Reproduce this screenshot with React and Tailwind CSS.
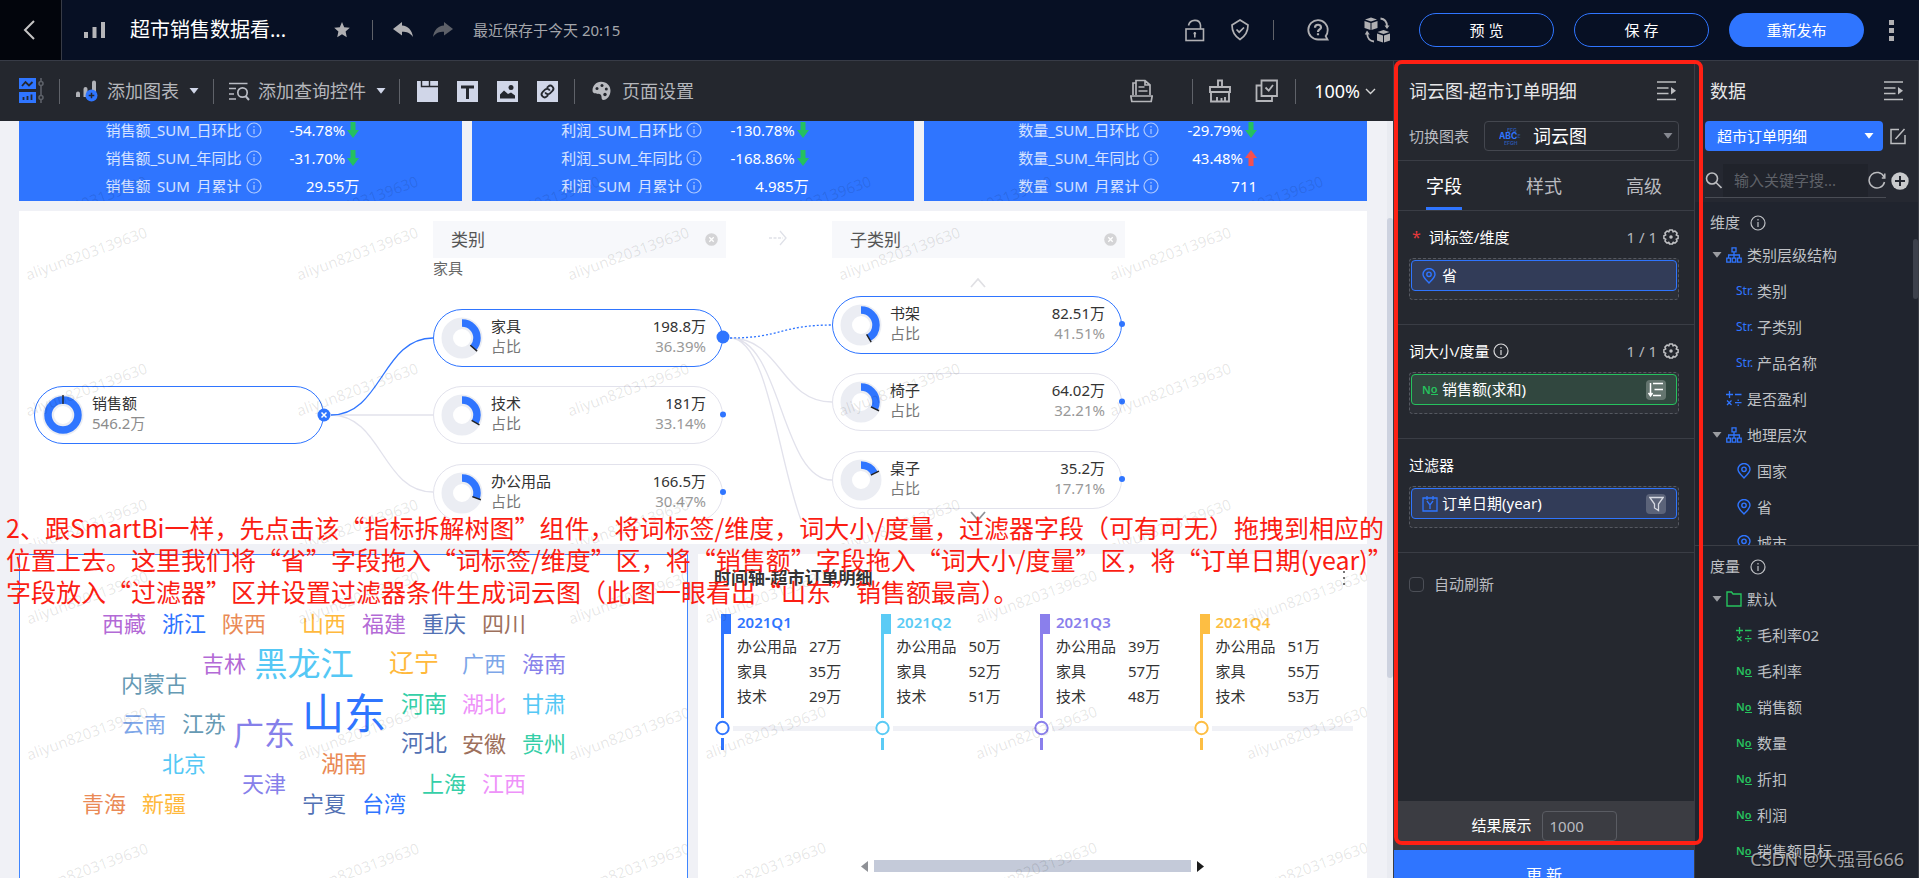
import React from "react";

const BLUE = "#2f75ff";

/* ---------- icons ---------- */

const Caret = ({ className = "" }) => (
  <svg className={className} width="10" height="6" viewBox="0 0 10 6" fill="currentColor" aria-hidden="true">
    <path d="M.5 0h9L5 5.800z" />
  </svg>
);

const InfoIcon = ({ className = "" }) => (
  <svg className={className} width="16" height="16" viewBox="0 0 16 16" fill="none" stroke="currentColor" strokeWidth="1.2" aria-hidden="true">
    <circle cx="8" cy="8" r="7" />
    <path d="M8 7v5M8 4v1.6" />
  </svg>
);

const BackIcon = () => (
  <svg width="12" height="20" viewBox="0 0 12 20" fill="none" stroke="#c5c5c5" strokeWidth="2" aria-hidden="true">
    <path d="M11 1 2 10l9 9" />
  </svg>
);

const BarsIcon = () => (
  <svg width="22" height="18" viewBox="0 0 22 18" fill="#b5b5b8" aria-hidden="true">
    <path d="M0 11h4v6H0zM8.500 6h4v11h-4zM17 1h4v16h-4z" />
  </svg>
);

const StarIcon = () => (
  <svg width="16" height="16" viewBox="0 0 16 16" fill="#b0b0b3" aria-hidden="true">
    <path d="M8 0l2.200 5.200 5.600.5-4.200 3.800 1.200 5.700L8 12.200l-4.800 3 1.200-5.700L.2 5.700l5.600-.5z" />
  </svg>
);

const UndoIcon = ({ flip = false }) => (
  <svg width="20" height="16" viewBox="0 0 20 16" fill={flip ? "#5d6068" : "#b0b0b3"} aria-hidden="true">
    <path transform={flip ? "translate(20 0) scale(-1 1)" : undefined} d="M9 0v3.500c6 .5 10 4.500 11 11.500-3-4-6-5.200-11-5.200v3.700L0 7z" />
  </svg>
);

const LockIcon = () => (
  <svg width="20" height="23" viewBox="0 0 20 23" fill="none" stroke="#b0b0b3" strokeWidth="1.6" aria-hidden="true">
    <rect x="1" y="10" width="17.500" height="11.500" />
    <path d="M3.500 6.500C5 0 14.500-.5 15.500 6v4M9.800 13v5.500" />
    <path d="M8.500 14.500h2.600" />
  </svg>
);

const ShieldIcon = () => (
  <svg width="18" height="22" viewBox="0 0 18 22" fill="none" stroke="#b0b0b3" strokeWidth="1.7" aria-hidden="true">
    <path d="M9 1 17 6c0 6-2.500 11-8 14.500C3.500 17 1 12 1 6z" />
    <path d="m5.500 10.500 2.700 2.700L13 8.500" />
  </svg>
);

const HelpIcon = () => (
  <svg width="23" height="22" viewBox="0 0 23 22" fill="none" stroke="#b0b0b3" strokeWidth="1.8" aria-hidden="true">
    <path d="M20.500 20.500H11A9.700 9.700 0 1 1 20.700 11c0 3-1 5-2 6.200z" />
    <path d="M8 8.800c0-4 6-4 6-.3 0 2-3 2-3 4.500M11 14.300v2" strokeWidth="2.200" />
  </svg>
);

const CubesIcon = () => (
  <svg width="26" height="26" viewBox="0 0 26 26" aria-hidden="true">
    <g fill="#b0b0b3">
      <path d="m7 .5 6 2-6 2-6-2zM.5 4l6 2v7l-6-2zM13.500 4l-6 2v7l6-2z" />
      <path d="m19.500 13 6 2-6 2-6-2zM13 16.500l6 2v7l-6-2zM26 16.500l-6 2v7l6-2z" />
      <path d="M20.500 8.500h5L23 12zM.8 17.500h5L3 13.500z" />
    </g>
    <path d="M16.500 1.500C20.500 2 22.800 4.500 23 9M3.200 17c.3 4 2.500 7 6.800 7.500" fill="none" stroke="#b0b0b3" strokeWidth="1.800" />
  </svg>
);

const LayoutIcon = () => (
  <svg width="26" height="26" viewBox="0 0 26 26" aria-hidden="true">
    <path d="M1 0h17v11H1zM1 14h17v11H1z" fill={BLUE} />
    <path d="m4 8 3.500-4L11 7.500 14.500 4M5.500 22v-3M9.500 22v-4M13.500 22v-5.500" fill="none" stroke="#24272e" strokeWidth="1.800" />
    <g fill="none" stroke="#5c6068" strokeWidth="1.600">
      <path d="M23 0v3M23 8v9M23 22v3" />
      <circle cx="23" cy="5.500" r="2" />
      <circle cx="23" cy="19.500" r="2" />
    </g>
  </svg>
);

const AddChartIcon = () => (
  <svg width="22" height="22" viewBox="0 0 22 22" aria-hidden="true">
    <path d="M0 13.500q0-2 2-2t2 2V17H0zM7.500 9q0-2 2-2t2 2v8h-4zM16 2.500q0-2 2-2t2 2V14h-4z" fill="#b0b2b8" />
    <circle cx="15.500" cy="15.500" r="6" fill={BLUE} />
    <path d="M15.500 12.700v5.600M12.700 15.500h5.600" stroke="#24272e" strokeWidth="1.500" />
  </svg>
);

const QueryIcon = () => (
  <svg width="21" height="19" viewBox="0 0 21 19" fill="none" stroke="#b9bcc4" strokeWidth="1.700" aria-hidden="true">
    <path d="M0 1.500h18.500M0 6.500h7M0 12h5M0 17h7" />
    <circle cx="13.500" cy="10.500" r="4.700" />
    <path d="m16.500 14 3.500 4" strokeWidth="2" />
  </svg>
);

const TabBoxIcon = () => (
  <svg width="21" height="21" viewBox="0 0 21 21" aria-hidden="true">
    <path d="M0 0h21v21H0z" fill="#d0d6e8" />
    <path d="M4.500 0v5.500H21M12.500 0v5" fill="none" stroke="#24272e" strokeWidth="1.400" />
  </svg>
);

const TextBoxIcon = () => (
  <svg width="21" height="21" viewBox="0 0 21 21" aria-hidden="true">
    <path d="M0 0h21v21H0z" fill="#d0d6e8" />
    <path d="M4 6h13M10.500 5v13" fill="none" stroke="#24272e" strokeWidth="3" />
  </svg>
);

const ImageBoxIcon = () => (
  <svg width="21" height="21" viewBox="0 0 21 21" aria-hidden="true">
    <path d="M0 0h21v21H0z" fill="#d0d6e8" />
    <path d="M3 17.500v-4l4-4 4 3.500 3-1.500 4 3v3z" fill="#24272e" />
    <circle cx="14" cy="6.500" r="2.500" fill="#24272e" />
  </svg>
);

const LinkBoxIcon = () => (
  <svg width="21" height="21" viewBox="0 0 21 21" aria-hidden="true">
    <path d="M0 0h21v21H0z" fill="#d0d6e8" />
    <g transform="rotate(-45 10.500 10.500)" fill="none" stroke="#24272e" strokeWidth="1.800">
      <path d="M8.500 13.500h-2a3 3 0 0 1 0-6H10a3 3 0 0 1 2.800 4" />
      <path d="M12.500 7.500h2a3 3 0 0 1 0 6H11a3 3 0 0 1-2.800-4" />
    </g>
  </svg>
);

const PaletteIcon = () => (
  <svg width="19" height="20" viewBox="0 0 19 20" aria-hidden="true">
    <path d="M9 .8c6 0 9.500 4 9.500 9S15 19 11.500 19c-3 0-1-4-3-5.500S.5 14 .5 9.500 4 .8 9 .8z" fill="#b9bbc0" />
    <g fill="#24272e">
      <circle cx="5" cy="7.500" r="1.500" />
      <circle cx="10" cy="4.500" r="1.500" />
      <circle cx="14.300" cy="8" r="1.500" />
      <circle cx="13" cy="13.500" r="1.700" />
    </g>
  </svg>
);

const PaperIcon = () => (
  <svg width="23" height="24" viewBox="0 0 23 24" fill="none" stroke="#b5b6ba" strokeWidth="1.700" aria-hidden="true">
    <path d="M6 16V1.500h9l5 4.500v10M15 1.500V6h5M3 16V4h3M8.500 8h6M8.500 12h9" />
    <path d="M.8 17h21.400l-1 5.500H1.800z" />
  </svg>
);

const BrushIcon = () => (
  <svg width="22" height="24" viewBox="0 0 22 24" fill="none" stroke="#b5b6ba" strokeWidth="1.900" aria-hidden="true">
    <path d="M9 8V1.500h4V8M1 8h20v5H1zM2 13v9.500h18V13M8 22v-4M12.500 22v-3M16 22v-4" />
  </svg>
);

const CheckCopyIcon = () => (
  <svg width="24" height="24" viewBox="0 0 24 24" fill="none" stroke="#b5b6ba" strokeWidth="1.800" aria-hidden="true">
    <path d="M6.500 1.500H22v15.500H6.500z" />
    <path d="M6.500 6.500H1.500v15.500H17v-5M10.500 8.500l3.200 3.200L18 6" />
  </svg>
);

const CollapseIcon = () => (
  <svg width="19" height="20" viewBox="0 0 19 20" fill="none" stroke="#bcbdc0" strokeWidth="1.600" aria-hidden="true">
    <path d="M0 1h19M0 7h11.500M0 12.500h11.500M0 18.500h19" />
    <path d="M14 6l5 3.800-5 3.800z" fill="#bcbdc0" stroke="none" />
  </svg>
);

const GearIcon = () => (
  <svg width="16" height="16" viewBox="0 0 16 16" fill="none" stroke="#c0c1c4" strokeWidth="1.500" strokeLinejoin="round" aria-hidden="true">
    <path d="M6.500 1h3l.6 1.900 1.900-.9 2.100 2.100-.9 1.900 1.900.6v2.900l-1.900.6.9 1.900-2.100 2.100-1.900-.9-.6 1.900h-3l-.6-1.900-1.900.9L1.900 12l.9-1.900-1.900-.6V6.600L2.800 6l-.9-1.900L4 2l1.900.9z" />
    <circle cx="8" cy="8" r="1" fill="#c0c1c4" />
  </svg>
);

const PinIcon = () => (
  <svg width="14" height="16" viewBox="0 0 14 16" fill="none" stroke={BLUE} strokeWidth="1.400" aria-hidden="true">
    <path d="M7 15C4.500 12.500 1 9.500 1 6.300A5.800 5.600 0 0 1 13 6.300C13 9.500 9.500 12.500 7 15z" />
    <circle cx="7" cy="6.300" r="2.200" />
  </svg>
);

const HierarchyIcon = () => (
  <svg width="16" height="16" viewBox="0 0 16 16" fill="none" stroke={BLUE} strokeWidth="1.300" aria-hidden="true">
    <path d="M6 .8h4v4H6zM.8 11.200h3.600v4H.8zM6.200 11.200h3.600v4H6.200zM11.600 11.200h3.600v4h-3.600zM8 5v6M2.600 11V8h10.800v3" />
  </svg>
);

const CalcIcon = ({ color }) => (
  <svg width="16" height="16" viewBox="0 0 16 16" fill="none" stroke={color} strokeWidth="1.300" aria-hidden="true">
    <path d="M0 3.500h7M3.500 0v7M9 3.500h6.500M1 9.500l4.500 4.500M5.500 9.500 1 14M9 11.700h6.500M12.200 8.500v1.500M12.200 13.500V15" />
  </svg>
);

const FolderIcon = () => (
  <svg width="16" height="16" viewBox="0 0 16 16" fill="none" stroke="#26c25e" strokeWidth="1.400" aria-hidden="true">
    <path d="M1 15V1h4.500l1.500 2h8v12z" />
  </svg>
);

const YearIcon = () => (
  <svg width="16" height="16" viewBox="0 0 16 16" fill="none" stroke={BLUE} strokeWidth="1.300" aria-hidden="true">
    <path d="M1 2h14v13H1zM5 0v4M11 0v4M5 5l3 4 3-4M8 9v4" />
  </svg>
);

const NumberMark = () => (
  <span className="flex items-center text-[11px] leading-4 font-semibold text-[#26c25e]" aria-hidden="true">
    N
    <span className="border-b border-[#26c25e] text-[11px] leading-[10px]">o</span>
  </span>
);

const WordCloudIcon = () => (
  <svg width="22" height="18" viewBox="0 0 22 18" aria-hidden="true">
    <g fontFamily="Inter, sans-serif" fontWeight="700" fill="#2f75ff">
      <text x="8" y="4.500" fontSize="5" opacity=".55">EFG</text>
      <text x="0" y="12" fontSize="8.500">ABC</text>
      <text x="5" y="17.500" fontSize="5" opacity=".55">EFGH</text>
      <text x="18.500" y="11" fontSize="5" opacity=".45">E</text>
    </g>
  </svg>
);

const CloseDot = () => (
  <svg width="13" height="13" viewBox="0 0 13 13" aria-hidden="true">
    <circle cx="6.500" cy="6.500" r="6.300" fill="#d4d4d6" />
    <path d="m4.300 4.300 4.400 4.400M8.700 4.300 4.300 8.700" stroke="#fff" strokeWidth="1.300" />
  </svg>
);

/* ---------- shared pieces ---------- */

const Divider = ({ className = "" }) => <span className={"w-px shrink-0 bg-[#5f6269] " + className} />;

const markCols = {
  2: "grid-cols-[repeat(2,271px)]",
  3: "grid-cols-[repeat(3,271px)]",
  5: "grid-cols-[repeat(5,271px)]",
};

const Watermark = ({ cols, rows, className = "" }) => (
  <div className="pointer-events-none absolute inset-0 overflow-hidden" aria-hidden="true">
    <div className={"grid auto-rows-[136px] " + markCols[cols] + " " + className}>
      {Array.from({ length: cols * rows }, (_, i) => (
        <div key={i} className="pt-[30px] pl-[3px]">
          <span className="inline-block -rotate-[20deg] text-[15px] leading-5 whitespace-nowrap text-black/10">
            aliyun8203139630
          </span>
        </div>
      ))}
    </div>
  </div>
);

/* ---------- header ---------- */

function Header() {
  return (
    <header className="flex h-[61px] shrink-0 items-center border-b border-[#373b46] bg-[#071024]">
      <button aria-label="返回" className="flex h-full w-[62px] items-center justify-center border-r border-[#373b46] bg-[#02050c] pr-1">
        <BackIcon />
      </button>
      <div className="flex items-center pl-[22px]">
        <BarsIcon />
        <h1 className="ml-6 w-[160px] text-[20px] leading-7 whitespace-nowrap text-white">超市销售数据看...</h1>
      </div>
      <button aria-label="收藏" className="ml-11"><StarIcon /></button>
      <Divider className="ml-[22px] h-5" />
      <button aria-label="撤销" className="ml-5"><UndoIcon /></button>
      <button aria-label="重做" className="ml-5"><UndoIcon flip /></button>
      <span className="ml-5 text-[15px] leading-5 whitespace-nowrap text-[#a4a6ab]">最近保存于今天 20:15</span>

      <div className="ml-auto flex items-center">
        <button aria-label="锁定"><LockIcon /></button>
        <button aria-label="校验" className="ml-[26px]"><ShieldIcon /></button>
        <Divider className="ml-6 h-5" />
        <button aria-label="帮助" className="ml-[33px]"><HelpIcon /></button>
        <button aria-label="切换版本" className="ml-[34px]"><CubesIcon /></button>
        <div className="ml-[29px] flex gap-5 text-[15px] text-white">
          <button className="h-[34px] w-[135px] rounded-full border border-[#2f75ff]">预 览</button>
          <button className="h-[34px] w-[135px] rounded-full border border-[#2f75ff]">保 存</button>
          <button className="h-[34px] w-[135px] rounded-full bg-[#2f75ff]">重新发布</button>
        </div>
        <button aria-label="更多" className="mr-[25px] ml-[25px] flex flex-col gap-[3px]">
          <span className="size-[5px] bg-[#b0b0b3]" />
          <span className="size-[5px] bg-[#b0b0b3]" />
          <span className="size-[5px] bg-[#b0b0b3]" />
        </button>
      </div>
    </header>
  );
}

function Toolbar() {
  return (
    <div className="flex h-[60px] shrink-0 items-center bg-[#24272e] pl-[18px] text-[18px] leading-6 whitespace-nowrap text-[#b4b6bb]">
      <button aria-label="组件布局"><LayoutIcon /></button>
      <Divider className="ml-[15px] h-[25px]" />
      <button className="ml-4 flex items-center">
        <AddChartIcon />
        <span className="ml-[9px]">添加图表</span>
        <Caret className="ml-[10px] text-[#d0d6e8]" />
      </button>
      <Divider className="ml-[14px] h-[25px]" />
      <button className="ml-[15px] flex items-center">
        <QueryIcon />
        <span className="ml-2">添加查询控件</span>
        <Caret className="ml-[10px] text-[#d0d6e8]" />
      </button>
      <Divider className="ml-[13px] h-[25px]" />
      <div className="ml-[17px] flex gap-[19px]">
        <button aria-label="页签"><TabBoxIcon /></button>
        <button aria-label="文本"><TextBoxIcon /></button>
        <button aria-label="图片"><ImageBoxIcon /></button>
        <button aria-label="链接"><LinkBoxIcon /></button>
      </div>
      <Divider className="ml-[16px] h-[25px]" />
      <button className="ml-[17px] flex items-center">
        <PaletteIcon />
        <span className="ml-[11px]">页面设置</span>
      </button>
      <div className="mr-[17px] ml-auto flex items-center">
        <button aria-label="草稿"><PaperIcon /></button>
        <Divider className="ml-[39px] h-[25px]" />
        <button aria-label="清除样式" className="ml-4"><BrushIcon /></button>
        <button aria-label="批量选择" className="ml-6"><CheckCopyIcon /></button>
        <Divider className="ml-4 h-[25px]" />
        <button className="ml-[18px] flex items-center text-white">
          100%
          <svg className="ml-[5px]" width="11" height="7" viewBox="0 0 11 7" fill="none" stroke="#d5d5d5" strokeWidth="1.400" aria-hidden="true">
            <path d="m1 1 4.500 4.500L10 1" />
          </svg>
        </button>
      </div>
    </div>
  );
}

/* ---------- KPI cards ---------- */

const kpis = [
  { name: "销售额", day: "-54.78%", dayUp: false, year: "-31.70%", yearUp: false, total: "29.55万" },
  { name: "利润", day: "-130.78%", dayUp: false, year: "-168.86%", yearUp: false, total: "4.985万" },
  { name: "数量", day: "-29.79%", dayUp: false, year: "43.48%", yearUp: true, total: "711" },
];

const TrendArrow = ({ up }) => (
  <svg className="ml-0.5" width="12" height="16" viewBox="0 0 12 16" fill={up ? "#f5504f" : "#25c15f"} aria-label={up ? "上升" : "下降"}>
    <path transform={up ? "rotate(180 6 8)" : undefined} d="M3.500 0h5v8H12l-6 8-6-8h3.500z" />
  </svg>
);

function KpiRow({ label, value, up, clipped }) {
  return (
    <>
      <dt className="flex h-7 items-center text-white/80">
        <span className={"overflow-hidden leading-[19px] " + (clipped ? "mb-[3px] h-4" : "h-[19px]")}>{label}</span>
        <InfoIcon className="ml-1 text-white/60" />
      </dt>
      <dd className="flex h-7 items-center justify-end text-white">
        {value}
        {up !== undefined && <TrendArrow up={up} />}
      </dd>
    </>
  );
}

function KpiCard({ k }) {
  return (
    <section className="relative flex h-20 flex-1 flex-col items-center justify-end overflow-hidden bg-[#2f75ff] pr-4 pb-px text-[15px]">
      <dl className="grid grid-cols-[auto_auto] gap-x-7 whitespace-nowrap">
        <KpiRow label={k.name + "_SUM_日环比"} value={k.day} up={k.dayUp} />
        <KpiRow label={k.name + "_SUM_年同比"} value={k.year} up={k.yearUp} />
        <KpiRow label={k.name + "_SUM_月累计"} value={k.total} clipped />
      </dl>
      <Watermark cols={2} rows={1} className="pt-10" />
    </section>
  );
}

/* ---------- decomposition tree ---------- */

function Donut({ pct }) {
  const r = 15;
  const len = 2 * Math.PI * r;
  return (
    <svg className="shrink-0" width="42" height="42" viewBox="-21 -21 42 42" aria-hidden="true">
      <circle r="14.750" fill="none" stroke="#ebedf3" strokeWidth="11.500" />
      <circle r={r} fill="none" stroke={BLUE} strokeWidth="7.500" strokeDasharray={`${(len * pct) / 100} ${len}`} transform="rotate(-90)" />
      <path d="M0-11v-9" stroke="#222" strokeWidth="1.400" transform={`rotate(${(pct * 360) / 100})`} />
    </svg>
  );
}

const treeNodes = [
  { name: "销售额", value: "546.2万", pct: 100, x: 15, y: 175, root: true, active: true },
  { name: "家具", value: "198.8万", pct: 36.39, x: 414, y: 98, active: true },
  { name: "技术", value: "181万", pct: 33.14, x: 414, y: 175 },
  { name: "办公用品", value: "166.5万", pct: 30.47, x: 414, y: 253 },
  { name: "书架", value: "82.51万", pct: 41.51, x: 813, y: 85, active: true },
  { name: "椅子", value: "64.02万", pct: 32.21, x: 813, y: 162 },
  { name: "桌子", value: "35.2万", pct: 17.71, x: 813, y: 240 },
];

function TreeNode({ n }) {
  return (
    <div
      className={
        "absolute flex h-[58px] w-[290px] items-center gap-2 rounded-[29px] border bg-white pr-4 pl-[7px] text-[15px] leading-5 text-[#333] " +
        (n.active ? "border-[#2f75ff]" : "border-[#e2e2ec]")
      }
      style={{ left: n.x, top: n.y }}
    >
      <Donut pct={n.pct} />
      {n.root ? (
        <div className="pb-1">
          <div>{n.name}</div>
          <div className="text-[#8c8c8c]">{n.value}</div>
        </div>
      ) : (
        <div className="grid flex-1 grid-cols-[1fr_auto] pb-1 text-right">
          <div className="text-left">{n.name}</div>
          <div>{n.value}</div>
          <div className="text-left text-[#777]">占比</div>
          <div className="text-[#999]">{n.pct}%</div>
        </div>
      )}
    </div>
  );
}

function TreeHeader({ label, x }) {
  return (
    <div className="absolute top-[10px] flex h-[37px] w-[293px] items-center justify-between bg-[#f7f8fb] pr-2 pl-[18px] text-[17px] text-[#555]" style={{ left: x }}>
      {label}
      <button aria-label={"移除" + label}><CloseDot /></button>
    </div>
  );
}

function TreeCard() {
  return (
    <section className="relative h-[333px] shrink-0 overflow-hidden bg-white">
      <TreeHeader label="类别" x={414} />
      <TreeHeader label="子类别" x={813} />
      <div className="absolute top-[47px] left-[414px] text-[15px] leading-5 text-[#666]">家具</div>
      <div className="absolute inset-x-0 top-0 h-[309px] overflow-hidden">
        <svg className="absolute top-0 left-0" width="1348" height="309" viewBox="0 0 1348 309" fill="none" stroke="#e2e2ec" strokeWidth="1.300" aria-hidden="true">
          <path d="M750 27h14" strokeDasharray="3 1.500" stroke="#dfe1e8" />
          <path d="m761 20 6 7-6 7" stroke="#dfe1e8" />
          <path d="M312 204h102M312 204c51 0 51 77 102 77" />
          <path d="M312 204c51 0 51-77 102-77" stroke={BLUE} />
          <path d="M711 127c51 0 51 64 102 64M711 127c51 0 51 142 102 142M711 127c51 0 51 218 102 218" />
          <path d="M711 127c51 0 51-13 102-13" stroke={BLUE} strokeDasharray="2 2" />
          <path d="m952 76 7-8 7 8" stroke="#e0e0e4" strokeWidth="1.800" />
          <path d="m952 301 7 8 7-8" stroke="#8f9196" strokeWidth="1.800" />
        </svg>
        {treeNodes.map((n) => (
          <TreeNode key={n.name} n={n} />
        ))}
        <svg className="absolute top-0 left-0" width="1348" height="309" viewBox="0 0 1348 309" fill={BLUE} aria-hidden="true">
          <circle cx="305" cy="204" r="6.500" />
          <path d="m302.500 201.500 5 5M307.500 201.500l-5 5" stroke="#fff" strokeWidth="1.500" />
          <circle cx="704" cy="126" r="6.500" />
          <circle cx="704" cy="203.500" r="3" />
          <circle cx="704" cy="281" r="3" />
          <circle cx="1103" cy="113" r="3" />
          <circle cx="1103" cy="190.500" r="3" />
          <circle cx="1103" cy="268" r="3" />
        </svg>
      </div>
      <Watermark cols={5} rows={3} />
    </section>
  );
}

/* ---------- word cloud ---------- */

const words = [
  ["西藏", 124, 625, 22, "#b36ad6"], ["浙江", 184, 625, 22, "#2f75ff"], ["陕西", 244, 625, 22, "#ea8a56"],
  ["山西", 324, 625, 22, "#ffb93c"], ["福建", 384, 625, 22, "#b36ad6"], ["重庆", 444, 625, 22, "#5271b4"],
  ["四川", 504, 625, 22, "#9d705c"], ["吉林", 224, 665, 22, "#b36ad6"], ["黑龙江", 304, 665, 33, "#55c8f5"],
  ["辽宁", 414, 664, 25, "#ffb93c"], ["广西", 484, 665, 22, "#7da6e8"], ["海南", 544, 665, 22, "#8680ea"],
  ["内蒙古", 154, 685, 22, "#669ab4"], ["河南", 424, 705, 23, "#35cfa8"], ["湖北", 484, 705, 22, "#ee92f9"],
  ["甘肃", 544, 705, 22, "#55c8f5"], ["山东", 344, 715, 42, "#2f75ff"], ["云南", 144, 725, 22, "#7da6e8"],
  ["江苏", 204, 725, 22, "#669ab4"], ["广东", 264, 735, 31, "#8680ea"], ["河北", 424, 744, 23, "#5271b4"],
  ["安徽", 484, 745, 22, "#9d705c"], ["贵州", 544, 745, 22, "#35cfa8"], ["北京", 184, 765, 22, "#55c8f5"],
  ["湖南", 344, 765, 23, "#ea8a56"], ["天津", 264, 785, 22, "#8680ea"], ["上海", 444, 785, 22, "#35cfa8"],
  ["江西", 504, 785, 22, "#ee92f9"], ["青海", 104, 805, 22, "#ea8a56"], ["新疆", 164, 805, 22, "#ffb93c"],
  ["宁夏", 324, 805, 22, "#5271b4"], ["台湾", 384, 805, 22, "#2f75ff"],
];

function WordCloudCard() {
  return (
    <section className="relative overflow-hidden border border-b-0 border-[#3f86ff] bg-white">
      {words.map(([w, x, y, size, color]) => (
        <span
          key={w}
          className="absolute -translate-x-1/2 -translate-y-1/2 leading-none whitespace-nowrap"
          style={{ left: x - 20, top: y - 557, fontSize: size, color }}
        >
          {w}
        </span>
      ))}
      <Watermark cols={3} rows={3} />
    </section>
  );
}

/* ---------- timeline ---------- */

const quarters = [
  { q: "2021Q1", color: "#2f75ff", v: ["27万", "35万", "29万"] },
  { q: "2021Q2", color: "#5bcbf5", v: ["50万", "52万", "51万"] },
  { q: "2021Q3", color: "#8a7fec", v: ["39万", "57万", "48万"] },
  { q: "2021Q4", color: "#fdbe43", v: ["51万", "55万", "53万"] },
];
const cats = ["办公用品", "家具", "技术"];

function TimelineCard() {
  return (
    <section className="relative overflow-hidden bg-white">
      <div className="flex items-center justify-between pt-3 pr-[22px] pl-4">
        <h2 className="text-[17px] leading-6 font-bold whitespace-nowrap text-[#333]">时间轴-超市订单明细</h2>
        <button aria-label="更多" className="flex flex-col gap-1">
          <span className="size-0.5 bg-[#777]" />
          <span className="size-0.5 bg-[#777]" />
          <span className="size-0.5 bg-[#777]" />
        </button>
      </div>
      <div className="mt-6 flex pr-[14px] pl-[17px]">
        {quarters.map((c) => (
          <div key={c.q} className="flex-1">
            <div className="ml-1.5 flex h-[104px] gap-1.5">
              <div className="flex w-[10px] flex-col">
                <span className="h-5" style={{ background: c.color }} />
                <span className="w-[3px] flex-1" style={{ background: c.color }} />
              </div>
              <div className="text-[15px] whitespace-nowrap text-[#333]">
                <div className="leading-4 font-semibold" style={{ color: c.color }}>{c.q}</div>
                <div className="mt-1 grid grid-cols-[72px_auto] leading-[25px]">
                  {cats.map((t, i) => (
                    <React.Fragment key={t}>
                      <span>{t}</span>
                      <span>{c.v[i]}</span>
                    </React.Fragment>
                  ))}
                </div>
              </div>
            </div>
            <div className="flex h-5 items-center gap-0.5">
              <svg width="16" height="16" viewBox="0 0 16 16" fill="none" aria-hidden="true">
                <circle cx="7.500" cy="8" r="6.200" stroke={c.color} strokeWidth="2" />
              </svg>
              <span className="h-[5px] flex-1 bg-[#f0f1f6]" />
            </div>
            <div className="ml-1.5 h-3 w-[3px]" style={{ background: c.color }} />
          </div>
        ))}
      </div>
      <div className="mt-[110px] flex h-3 items-center justify-center gap-1.5">
        <svg width="7" height="11" viewBox="0 0 7 11" fill="#8f9196" aria-hidden="true"><path d="M7 0v11L0 5.500z" /></svg>
        <span className="h-3 w-[317px] bg-[#c4cad9]" />
        <svg width="7" height="11" viewBox="0 0 7 11" fill="#1c1c1c" aria-hidden="true"><path d="M0 0v11l7-5.500z" /></svg>
      </div>
      <Watermark cols={3} rows={3} />
    </section>
  );
}

/* ---------- canvas ---------- */

function Canvas() {
  return (
    <div className="relative flex min-h-0 flex-1 bg-[#f0f1f6]">
      <div className="flex min-w-0 flex-1 flex-col gap-[10px] overflow-hidden pr-5 pl-[19px]">
        <div className="flex gap-[10px]">
          {kpis.map((k) => (
            <KpiCard key={k.name} k={k} />
          ))}
        </div>
        <TreeCard />
        <div className="grid min-h-0 flex-1 grid-cols-2 gap-[10px]">
          <WordCloudCard />
          <TimelineCard />
        </div>
      </div>
      <div className="w-1.5 shrink-0 bg-[#e9ebf1] pt-[97px]">
        <div className="h-[460px] rounded-full bg-[#cdd2df]" />
      </div>
      <p className="pointer-events-none absolute top-[390px] left-1.5 font-['Noto_Sans_CJK_SC',sans-serif] text-[25px] leading-8 whitespace-nowrap text-[#fb1d13]">
        2、跟SmartBi一样，先点击该“指标拆解树图”组件，将词标签/维度，词大小/度量，过滤器字段（可有可无）拖拽到相应的
        <br />
        位置上去。这里我们将“省”字段拖入“词标签/维度”区，将“销售额”字段拖入“词大小/度量”区，将“订单日期(year)”
        <br />
        字段放入“过滤器”区并设置过滤器条件生成词云图（此图一眼看出“山东”销售额最高）。
      </p>
    </div>
  );
}

/* ---------- chart settings ---------- */

function FieldSection({ title, required, info, counter, children }) {
  return (
    <section className="border-b border-[#3a3d45] px-[15px] pt-[10px] pb-6">
      <div className="flex h-8 items-center">
        {required && <span className="mr-2 ml-[3px] text-[16px] text-[#e5393c]">*</span>}
        <h3 className="text-[15px] text-white">{title}</h3>
        {info && <InfoIcon className="ml-[3px] text-[#d8d8da]" />}
        {counter && (
          <>
            <span className="ml-auto text-[15px] text-[#b4b6bb]">1 / 1</span>
            <button aria-label={title + "设置"} className="ml-1.5"><GearIcon /></button>
          </>
        )}
      </div>
      <div className="mt-[5px] h-[42px] rounded-sm border border-dashed border-[#555860] bg-[#2c2f36] p-px">{children}</div>
    </section>
  );
}

function Pill({ icon, label, green, action }) {
  return (
    <div
      className={
        "flex h-[31px] items-center rounded-sm border pr-[10px] pl-[10px] text-[15px] text-white " +
        (green ? "border-[#26c25e] bg-[#31473f]" : "border-[#2f75ff] bg-[#323c58]")
      }
    >
      <span className="flex w-5 items-center">{icon}</span>
      {label}
      {action}
    </div>
  );
}

function ChartPanel() {
  const tabs = ["字段", "样式", "高级"];
  return (
    <aside className="relative flex w-[302px] shrink-0 flex-col border-x border-[#3a3d45] bg-[#25282f] text-[#b9bbc0]">
      <div className="flex h-[60px] shrink-0 items-center justify-between pr-[18px] pl-[15px]">
        <h2 className="text-[18px] whitespace-nowrap text-[#e6e6e8]">词云图-超市订单明细</h2>
        <button aria-label="收起图表设置"><CollapseIcon /></button>
      </div>
      <div className="flex h-10 shrink-0 items-start border-b border-[#3a3d45] px-[15px]">
        <label htmlFor="chart-type" className="text-[15px] leading-[30px] whitespace-nowrap">切换图表</label>
        <div className="relative ml-[15px] flex-1">
          <span className="pointer-events-none absolute top-[6px] left-[15px]"><WordCloudIcon /></span>
          <select id="chart-type" className="h-[30px] w-full appearance-none rounded-sm border border-[#44474f] bg-transparent pl-12 text-[18px] leading-7 text-white">
            <option>词云图</option>
          </select>
          <Caret className="pointer-events-none absolute top-3 right-[6px] text-[#858890]" />
        </div>
      </div>
      <div role="tablist" className="flex h-[50px] shrink-0 justify-between border-b border-[#3a3d45] px-8 text-[18px]">
        {tabs.map((t, i) => (
          <button key={t} role="tab" aria-selected={i === 0} className={"border-b-[3px] pt-1 " + (i === 0 ? "border-[#2f75ff] text-white" : "border-transparent")}>
            {t}
          </button>
        ))}
      </div>
      <FieldSection title="词标签/维度" required counter>
        <Pill icon={<PinIcon />} label="省" />
      </FieldSection>
      <FieldSection title="词大小/度量" info counter>
        <Pill
          green
          icon={<NumberMark />}
          label="销售额(求和)"
          action={
            <button aria-label="排序" className="ml-auto flex size-5 items-center justify-center rounded-sm bg-white/25">
              <svg width="16" height="16" viewBox="0 0 16 16" fill="none" stroke="#fff" strokeWidth="1.500" aria-hidden="true">
                <path d="M2.500 1v12M5 1.500h10M6.500 7.500H15M5 13.500h8M.5 11l2 3 2-3" />
              </svg>
            </button>
          }
        />
      </FieldSection>
      <FieldSection title="过滤器">
        <Pill
          icon={<YearIcon />}
          label="订单日期(year)"
          action={
            <button aria-label="筛选" className="ml-auto flex size-5 items-center justify-center rounded-sm bg-white/20">
              <svg width="15" height="16" viewBox="0 0 15 16" fill="none" stroke="#d6d9e2" strokeWidth="1.300" aria-hidden="true">
                <path d="M.8 1.500h13.400L9.500 8v6.500l-4-2.500V8z" />
              </svg>
            </button>
          }
        />
      </FieldSection>
      <label className="flex items-center gap-[10px] px-[15px] pt-5 text-[15px]">
        <input type="checkbox" className="size-[15px] appearance-none rounded-sm border border-[#4c4f57]" />
        自动刷新
      </label>
      <div className="mt-auto flex h-[49px] shrink-0 items-center justify-center bg-[#3b3c42] text-[15px]">
        <label htmlFor="limit" className="text-white">结果展示</label>
        <input id="limit" defaultValue="1000" className="ml-[10px] h-[30px] w-[75px] rounded-sm border border-[#5a5c63] bg-transparent px-[7px] text-[15px] text-[#b9bbc0]" />
      </div>
      <button className="-mb-[22px] h-[50px] shrink-0 bg-[#2f75ff] text-[16px] text-white">更 新</button>
      <div className="pointer-events-none absolute -top-px -right-[9px] bottom-[33px] left-0 z-10 rounded-lg border-4 border-[#ff2014]" />
    </aside>
  );
}

/* ---------- data panel ---------- */

const glyph = {
  str: <span className="text-[12px] text-[#2f75ff]">Str.</span>,
  pin: <PinIcon />,
  hier: <HierarchyIcon />,
  calcBlue: <CalcIcon color={BLUE} />,
  calcGreen: <CalcIcon color="#26c25e" />,
  folder: <FolderIcon />,
  no: <NumberMark />,
};

const dimensions = [
  ["hier", "类别层级结构", 0, true], ["str", "类别", 1], ["str", "子类别", 1], ["str", "产品名称", 1],
  ["calcBlue", "是否盈利", 0], ["hier", "地理层次", 0, true], ["pin", "国家", 1], ["pin", "省", 1], ["pin", "城市", 1],
];
const measures = [
  ["folder", "默认", 0, true], ["calcGreen", "毛利率02", 1], ["no", "毛利率", 1], ["no", "销售额", 1],
  ["no", "数量", 1], ["no", "折扣", 1], ["no", "利润", 1], ["no", "销售额目标", 1],
];

function FieldList({ title, items }) {
  return (
    <>
      <h3 className="flex h-[30px] items-center gap-[10px] pt-px pl-[15px]">
        {title}
        <InfoIcon />
      </h3>
      <ul>
        {items.map(([icon, name, level, open]) => (
          <li key={name} className={"flex h-9 items-center " + (level ? "pl-[41px]" : "pl-[17px]")}>
            {!level && <Caret className={"mr-1 text-[#9a9ca1] " + (open ? "" : "invisible")} />}
            <span className={"flex w-[21px] shrink-0 items-center " + (level && icon === "pin" ? "pl-px" : "")}>{glyph[icon]}</span>
            {name}
          </li>
        ))}
      </ul>
    </>
  );
}

function DataPanel() {
  return (
    <aside className="flex w-[224px] shrink-0 flex-col border-r border-[#3a3d45] bg-[#252831] text-[15px] text-[#bfc1c5]">
      <div className="flex h-[60px] shrink-0 items-center justify-between pr-[15px] pl-[15px]">
        <h2 className="text-[18px] text-[#e6e6e8]">数据</h2>
        <button aria-label="收起数据面板"><CollapseIcon /></button>
      </div>
      <div className="flex shrink-0 items-center pr-3 pl-[10px]">
        <div className="relative flex-1">
          <select aria-label="数据集" className="h-[30px] w-full appearance-none rounded-sm bg-[#2f75ff] pl-3 text-[15px] text-white">
            <option>超市订单明细</option>
          </select>
          <Caret className="pointer-events-none absolute top-3 right-[9px] text-white" />
        </div>
        <button aria-label="编辑数据集" className="ml-[7px]">
          <svg width="16" height="17" viewBox="0 0 16 17" fill="none" stroke="#bcbdc0" strokeWidth="1.500" aria-hidden="true">
            <path d="M9 1.500H1v14h14V7M5.500 11 14.500 1" />
          </svg>
        </button>
      </div>
      <div className="mt-3 flex shrink-0 items-center pr-[10px] pl-[10px]">
        <div className="flex h-[35px] flex-1 items-center border-b border-[#4a4d55]">
          <svg className="shrink-0" width="17" height="17" viewBox="0 0 17 17" fill="none" stroke="#bcbdc0" strokeWidth="1.600" aria-hidden="true">
            <circle cx="7" cy="6.500" r="5.500" />
            <path d="m11 10.500 5.500 5.500" />
          </svg>
          <input aria-label="搜索字段" placeholder="输入关键字搜..." className="ml-px h-[33px] w-[145px] bg-[#20232b] pl-[11px] text-[15px] placeholder-[#5e6168]" />
          <button aria-label="刷新" className="shrink-0">
            <svg width="18" height="18" viewBox="0 0 18 18" fill="none" stroke="#bcbdc0" strokeWidth="1.500" aria-hidden="true">
              <path d="M16 6A7.800 7.800 0 1 0 16.500 11M16.800 2.500V7h-3" />
            </svg>
          </button>
        </div>
        <button aria-label="新建字段" className="ml-[5px]">
          <svg width="18" height="18" viewBox="0 0 18 18" aria-hidden="true">
            <circle cx="9" cy="9" r="8.700" fill="#c9cacc" />
            <path d="M9 4v10M4 9h10" stroke="#252831" strokeWidth="2" />
          </svg>
        </button>
      </div>
      <div className="mt-1 flex h-[344px] shrink-0 overflow-hidden border-b border-[#3a3d45] bg-[#20242e] pt-[5px]">
        <div className="flex-1">
          <FieldList title="维度" items={dimensions} />
        </div>
        <div className="mt-8 h-[60px] w-[5px] rounded-full bg-[#3d414c]" />
      </div>
      <div className="min-h-0 flex-1 overflow-hidden bg-[#20242e] pt-[5px]">
        <FieldList title="度量" items={measures} />
      </div>
    </aside>
  );
}

export default function App() {
  return (
    <div className="relative flex h-screen w-full flex-col overflow-hidden bg-[#24272e] font-['Noto_Sans','Noto_Sans_CJK_SC',sans-serif]">
      <Header />
      <main className="flex min-h-0 flex-1">
        <div className="flex min-w-0 flex-1 flex-col">
          <Toolbar />
          <Canvas />
        </div>
        <ChartPanel />
        <DataPanel />
      </main>
      <div className="pointer-events-none absolute right-[15px] bottom-[7px] text-[18px] leading-6 text-white/60 [text-shadow:1px_1px_1px_rgba(0,0,0,0.6)]">
        CSDN @大强哥666
      </div>
    </div>
  );
}
